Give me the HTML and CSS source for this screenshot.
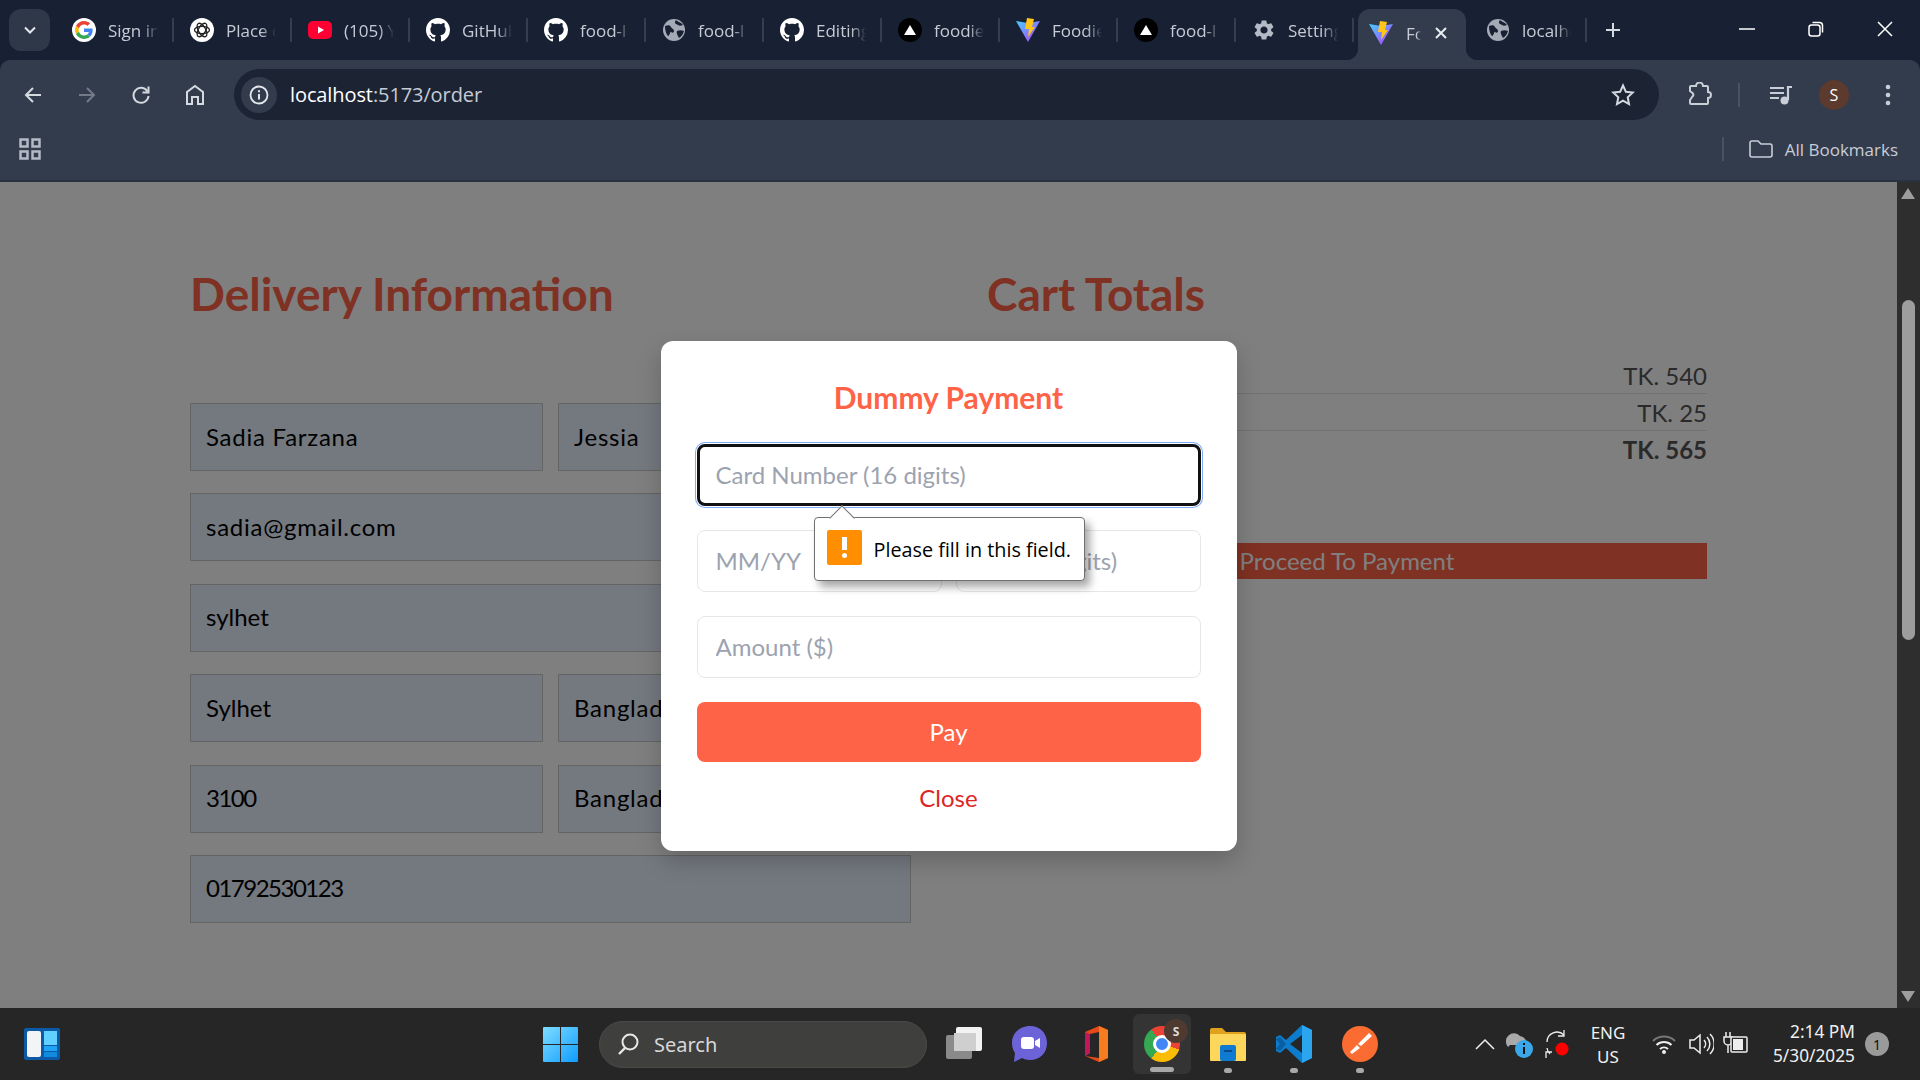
FILE: index.html
```html
<!DOCTYPE html>
<html lang="en">
<head>
    <meta charset="UTF-8">
    <meta name="viewport" content="width=device-width, initial-scale=1.0">
    <title>localhost:5173/order</title>
    <link rel="stylesheet" href="styles.css">
</head>
<body>

    <!-- shared icons -->
    <svg class="defs" aria-hidden="true">
        <symbol id="github" viewBox="0 0 16 16"><path fill="#fff" d="M8 0C3.58 0 0 3.58 0 8c0 3.54 2.29 6.53 5.47 7.59.4.07.55-.17.55-.38 0-.19-.01-.82-.01-1.49-2.01.37-2.53-.49-2.69-.94-.09-.23-.48-.94-.82-1.13-.28-.15-.68-.52-.01-.53.63-.01 1.08.58 1.23.82.72 1.21 1.87.87 2.33.66.07-.52.28-.87.51-1.07-1.78-.2-3.64-.89-3.64-3.95 0-.87.31-1.59.82-2.15-.08-.2-.36-1.02.08-2.12 0 0 .67-.21 2.2.82.64-.18 1.32-.27 2-.27.68 0 1.36.09 2 .27 1.53-1.04 2.2-.82 2.2-.82.44 1.1.16 1.92.08 2.12.51.56.82 1.27.82 2.15 0 3.07-1.87 3.75-3.65 3.95.29.25.54.73.54 1.48 0 1.07-.01 1.93-.01 2.2 0 .21.15.46.55.38A8.013 8.013 0 0016 8c0-4.42-3.58-8-8-8z"/></symbol>
        <symbol id="globe" viewBox="0 0 24 24"><circle cx="12" cy="12" r="11" fill="#a5abb6"/><path fill="#182133" d="M3 8c3-1 5-1 6 1s3 2 3 4-2 2-3 1-1 4-3 4c-2-2-3-6-3-10zM14 2c2 2 5 2 7 5-2 1-4 1-5 0s-3-1-3-2 0-2 1-3zM15 13c2-1 5-1 7 0-1 3-2 5-5 7-1-2-3-5-2-7z"/></symbol>
        <symbol id="next" viewBox="0 0 24 24"><circle cx="12" cy="12" r="12" fill="#000"/><path fill="#fff" d="M12 7l6 10H6z"/></symbol>
        <symbol id="vite" viewBox="0 0 24 24">
            <defs>
                <linearGradient id="viteV" x1="0" y1="0" x2="1" y2="1"><stop offset="0" stop-color="#41d1ff"/><stop offset="1" stop-color="#bd34fe"/></linearGradient>
            </defs>
            <path fill="url(#viteV)" d="M0 3l12 2 12-2-12 21z"/>
            <path fill="#ffc517" d="M11 0l7 1-2 8h3l-7 10 1-8H9z"/>
        </symbol>
    </svg>

    <div class="tabstrip">
        <button class="tab-search"><svg width="14" height="14" viewBox="0 0 14 14"><path d="M2 4.500l5 5 5-5" fill="none" stroke="#e4e7ec" stroke-width="2"/></svg></button>

        <div class="tab">
            <svg class="fav" viewBox="-8 -8 64 64"><circle cx="24" cy="24" r="32" fill="#fff"/><path fill="#EA4335" d="M24 9.5c3.54 0 6.71 1.22 9.21 3.6l6.85-6.85C35.9 2.38 30.47 0 24 0 14.62 0 6.51 5.38 2.56 13.22l7.98 6.19C12.43 13.72 17.74 9.5 24 9.5z"/><path fill="#4285F4" d="M46.98 24.55c0-1.57-.15-3.09-.38-4.55H24v9.02h12.94c-.58 2.96-2.26 5.48-4.78 7.18l7.73 6c4.51-4.18 7.09-10.36 7.09-17.65z"/><path fill="#FBBC05" d="M10.53 28.59c-.48-1.45-.76-2.99-.76-4.59s.27-3.14.76-4.59l-7.98-6.19C.92 16.46 0 20.12 0 24c0 3.88.92 7.54 2.56 10.78l7.97-6.19z"/><path fill="#34A853" d="M24 48c6.48 0 11.93-2.13 15.89-5.81l-7.73-6c-2.15 1.45-4.92 2.3-8.16 2.3-6.26 0-11.57-4.22-13.47-9.91l-7.98 6.19C6.51 42.62 14.62 48 24 48z"/></svg>
            <span class="tab-title">Sign in</span>
        </div>
        <div class="tab">
            <svg class="fav" viewBox="0 0 24 24"><circle cx="12" cy="12" r="12" fill="#fff"/><g fill="none" stroke="#222" stroke-width="1.3"><ellipse cx="12" cy="12" rx="7.5" ry="3.6"/><ellipse cx="12" cy="12" rx="7.5" ry="3.6" transform="rotate(60 12 12)"/><ellipse cx="12" cy="12" rx="7.5" ry="3.6" transform="rotate(120 12 12)"/></g></svg>
            <span class="tab-title">Place o</span>
        </div>
        <div class="tab">
            <svg class="fav" viewBox="0 0 24 24"><rect y="3" width="24" height="18" rx="5" fill="#ff0033"/><path fill="#fff" d="M10 8.500l6 3.500-6 3.500z"/></svg>
            <span class="tab-title">(105) Y</span>
        </div>
        <div class="tab"><svg class="fav"><use href="#github"/></svg><span class="tab-title">GitHub</span></div>
        <div class="tab"><svg class="fav"><use href="#github"/></svg><span class="tab-title">food-l</span></div>
        <div class="tab"><svg class="fav"><use href="#globe"/></svg><span class="tab-title">food-l</span></div>
        <div class="tab"><svg class="fav"><use href="#github"/></svg><span class="tab-title">Editing</span></div>
        <div class="tab"><svg class="fav"><use href="#next"/></svg><span class="tab-title">foodie</span></div>
        <div class="tab"><svg class="fav"><use href="#vite"/></svg><span class="tab-title">Foodie</span></div>
        <div class="tab"><svg class="fav"><use href="#next"/></svg><span class="tab-title">food-l</span></div>
        <div class="tab">
            <svg class="fav" viewBox="0 0 24 24"><path fill="#b4bac6" d="M19.14 12.94c.04-.3.06-.61.06-.94 0-.32-.02-.64-.07-.94l2.03-1.58c.18-.14.23-.41.12-.61l-1.92-3.32c-.12-.22-.37-.29-.59-.22l-2.39.96c-.5-.38-1.03-.7-1.62-.94l-.36-2.54c-.04-.24-.24-.41-.48-.41h-3.84c-.24 0-.43.17-.47.41l-.36 2.54c-.59.24-1.13.57-1.62.94l-2.39-.96c-.22-.08-.47 0-.59.22L2.74 8.87c-.12.21-.08.47.12.61l2.03 1.58c-.05.3-.09.63-.09.94s.02.64.07.94l-2.03 1.58c-.18.14-.23.41-.12.61l1.92 3.32c.12.22.37.29.59.22l2.39-.96c.5.38 1.03.7 1.62.94l.36 2.54c.05.24.24.41.48.41h3.84c.24 0 .44-.17.47-.41l.36-2.54c.59-.24 1.13-.56 1.62-.94l2.39.96c.22.08.47 0 .59-.22l1.92-3.32c.12-.22.07-.47-.12-.61l-2.01-1.58zM12 15.6c-1.98 0-3.6-1.62-3.6-3.6s1.62-3.6 3.6-3.6 3.6 1.62 3.6 3.6-1.62 3.6-3.6 3.6z"/></svg>
            <span class="tab-title">Settings</span>
        </div>
        <div class="tab-active">
            <svg class="fav"><use href="#vite"/></svg>
            <span class="tab-title">Foodie</span>
            <svg class="tab-close" width="14" height="14" viewBox="0 0 14 14"><path d="M2 2l10 10M12 2L2 12" stroke="#e8ebf0" stroke-width="2"/></svg>
        </div>
        <div class="tab tab-last"><svg class="fav"><use href="#globe"/></svg><span class="tab-title">localhost</span></div>
        <svg class="new-tab" width="18" height="18" viewBox="0 0 18 18"><path d="M9 2v14M2 9h14" stroke="#d5d9e0" stroke-width="2"/></svg>

        <div class="win-btns">
            <svg width="16" height="16" viewBox="0 0 16 16"><path d="M0 8h16" stroke="#fff" stroke-width="1.500"/></svg>
            <svg width="16" height="16" viewBox="0 0 16 16"><rect x="1" y="4" width="11" height="11" rx="2.500" fill="none" stroke="#fff" stroke-width="1.500"/><path d="M4.500 1.500h7a3 3 0 013 3v7" fill="none" stroke="#fff" stroke-width="1.500"/></svg>
            <svg width="16" height="16" viewBox="0 0 16 16"><path d="M1 1l14 14M15 1L1 15" stroke="#fff" stroke-width="1.500"/></svg>
        </div>
    </div>

    <div class="toolbar">
        <div class="nav-btns">
            <svg width="20" height="20" viewBox="0 0 20 20"><path d="M18 10H3M10 3l-7 7 7 7" fill="none" stroke="#d5d9e0" stroke-width="2"/></svg>
            <svg width="20" height="20" viewBox="0 0 20 20"><path d="M2 10h15M10 3l7 7-7 7" fill="none" stroke="#737a88" stroke-width="2"/></svg>
            <svg width="20" height="20" viewBox="0 0 20 20"><path d="M16.500 6.500A7.500 7.500 0 1017.500 11" fill="none" stroke="#d5d9e0" stroke-width="2"/><path d="M17.500 1.500v6h-6" fill="none" stroke="#d5d9e0" stroke-width="2"/></svg>
            <svg width="20" height="22" viewBox="0 0 20 22"><path d="M2 20V8l8-6 8 6v12h-5v-7H7v7z" fill="none" stroke="#d5d9e0" stroke-width="2"/></svg>
        </div>
        <div class="omnibox">
            <span class="site-info"><svg width="20" height="20" viewBox="0 0 20 20"><circle cx="10" cy="10" r="8.500" fill="none" stroke="#e4e7ec" stroke-width="1.800"/><path d="M10 9v5.500M10 5.300v2" stroke="#e4e7ec" stroke-width="2"/></svg></span>
            <span class="url"><b>localhost</b>:5173/order</span>
            <svg class="star" width="24" height="24" viewBox="0 0 24 24"><path d="M12 2.500l2.900 6.300 6.800.8-5 4.700 1.300 6.800-6-3.400-6 3.400 1.300-6.800-5-4.700 6.800-.8z" fill="none" stroke="#d5d9e0" stroke-width="2"/></svg>
        </div>
        <svg class="ext" width="26" height="26" viewBox="0 0 26 26"><path d="M3 5a1 1 0 011-1h5a3.500 3.500 0 017 0h4a1 1 0 011 1v5a3 3 0 010 6v5a1 1 0 01-1 1H4a1 1 0 01-1-1v-3l2.500-3.500a2.500 2.500 0 000-3.500L3 9z" fill="none" stroke="#c8cdd6" stroke-width="2"/></svg>
        <span class="tool-sep"></span>
        <svg class="media" width="24" height="22" viewBox="0 0 24 22"><path d="M1 4h14M1 9h14M1 14h9" stroke="#c8cdd6" stroke-width="2"/><path d="M19 16V3h4" fill="none" stroke="#c8cdd6" stroke-width="2.200"/><circle cx="15.500" cy="16.500" r="4" fill="#c8cdd6"/></svg>
        <span class="avatar">S</span>
        <svg class="kebab" width="6" height="22" viewBox="0 0 6 22"><circle cx="3" cy="3" r="2.300" fill="#c8cdd6"/><circle cx="3" cy="11" r="2.300" fill="#c8cdd6"/><circle cx="3" cy="19" r="2.300" fill="#c8cdd6"/></svg>
    </div>

    <div class="bookmarks">
        <svg width="22" height="22" viewBox="0 0 22 22"><g fill="none" stroke="#b4bac6" stroke-width="2.500"><rect x="1.500" y="1.500" width="7" height="7"/><rect x="13.500" y="1.500" width="7" height="7"/><rect x="1.500" y="13.500" width="7" height="7"/><rect x="13.500" y="13.500" width="7" height="7"/></g></svg>
        <span class="tool-sep bm-sep"></span>
        <svg width="24" height="18" viewBox="0 0 24 18"><path d="M1 3a2 2 0 012-2h6l3 3h9a2 2 0 012 2v9a2 2 0 01-2 2H3a2 2 0 01-2-2z" fill="none" stroke="#c8cdd6" stroke-width="1.600"/></svg>
        <span class="bm-label">All Bookmarks</span>
    </div>

    <div class="viewport">
        <main class="page">
            <section class="delivery">
                <h2>Delivery Information</h2>
                <form class="form-grid">
                    <div class="multi">
                        <input class="field field-wide" value="Sadia Farzana">
                        <input class="field field-wide" value="Jessia">
                    </div>
                    <input class="field field-wide" value="sadia@gmail.com">
                    <input class="field" value="sylhet">
                    <div class="multi">
                        <input class="field" value="Sylhet">
                        <input class="field field-wide" value="Bangladesh">
                    </div>
                    <div class="multi">
                        <input class="field field-num" value="3100">
                        <input class="field field-wide" value="Bangladesh">
                    </div>
                    <input class="field field-num" value="01792530123">
                </form>
            </section>

            <section class="cart">
                <h2>Cart Totals</h2>
                <div class="totals">
                    <div class="total-row"><span>Subtotal</span><span>TK. 540</span></div>
                    <div class="total-row"><span>Delivery Fee</span><span>TK. 25</span></div>
                    <div class="total-row total-sum"><span>Total</span><span>TK. 565</span></div>
                </div>
                <button class="proceed">Proceed To Payment</button>
            </section>
        </main>

        <div class="overlay">
            <div class="modal">
                <h3>Dummy Payment</h3>
                <input class="pay-input pay-focus" placeholder="Card Number (16 digits)">
                <div class="pay-row">
                    <input class="pay-input" placeholder="MM/YY">
                    <input class="pay-input" placeholder="CVV (3 digits)">
                </div>
                <input class="pay-input" placeholder="Amount ($)">
                <button class="pay-btn">Pay</button>
                <button class="close-btn">Close</button>

                <div class="bubble">
                    <span class="bubble-icon"></span>
                    <span class="bubble-text">Please fill in this field.</span>
                </div>
            </div>
        </div>

        <div class="scrollbar">
            <span class="arrow-up"></span>
            <span class="thumb"></span>
            <span class="arrow-down"></span>
        </div>
    </div>

    <footer class="taskbar">
        <svg class="widgets" width="36" height="32" viewBox="0 0 36 32"><rect width="36" height="32" rx="2" fill="#0c5aa6"/><rect x="3" y="3" width="14" height="26" rx="2" fill="#f2f4f6"/><rect x="20" y="3" width="13" height="14" fill="#5fd0ff"/><rect x="20" y="18" width="13" height="5" fill="#1ea4f4"/><rect x="20" y="24" width="13" height="5" fill="#0f8be0"/></svg>

        <div class="task-center">
            <svg class="start" width="35" height="35" viewBox="0 0 35 35"><defs><linearGradient id="win" x1="0" y1="0" x2="1" y2="1"><stop offset="0" stop-color="#7fdcff"/><stop offset="1" stop-color="#0f9cff"/></linearGradient></defs><path fill="url(#win)" d="M1 0h16v17H0V1a1 1 0 011-1zM18 0h16a1 1 0 011 1v16H18zM0 18h17v17H1a1 1 0 01-1-1zM18 18h17v16a1 1 0 01-1 1H18z"/></svg>
            <div class="search-pill">
                <svg width="24" height="24" viewBox="0 0 24 24"><circle cx="14" cy="10" r="7.500" fill="none" stroke="#e8e8e8" stroke-width="2"/><path d="M9 16l-6 6" stroke="#e8e8e8" stroke-width="2.400"/></svg>
                <span>Search</span>
            </div>
            <div class="app">
                <svg width="36" height="34" viewBox="0 0 36 34"><rect x="10" y="0" width="26" height="24" rx="2" fill="#f2f2f2"/><rect x="0" y="8" width="26" height="24" rx="2" fill="#8a8a8a"/><rect x="8" y="6" width="22" height="18" fill="#cfcfcf"/></svg>
            </div>
            <div class="app">
                <svg width="36" height="38" viewBox="0 0 36 38"><path d="M18 1c10 0 17 7 17 17s-7 17-17 17c-3 0-6-.7-8-2l-8 4 1-9c-2-3-3-6-3-10C0 8 8 1 18 1z" fill="#6d63d8"/><rect x="9" y="12" width="13" height="12" rx="3" fill="#fff"/><path d="M23 16l5-3v10l-5-3z" fill="#fff"/></svg>
            </div>
            <div class="app">
                <svg width="26" height="38" viewBox="0 0 26 38"><path d="M2 7L16 1l9 4v28l-9 4L2 31l14 2V7L7 9v19l-5 3z" fill="#e64a19"/><path d="M16 1l9 4v28l-9 4V33V7z" fill="#f57c1f"/><path d="M2 7l5 2v19l-5 3z" fill="#c2185b"/></svg>
            </div>
            <div class="app app-on">
                <span class="chrome"><span class="chrome-eye"></span></span>
                <span class="chrome-badge">S</span>
                <span class="app-pill"></span>
            </div>
            <div class="app">
                <svg width="36" height="34" viewBox="0 0 36 34"><path d="M0 3a2 2 0 012-2h10l4 4h18a2 2 0 012 2v4H0z" fill="#e0a21c"/><rect y="7" width="36" height="27" rx="1" fill="#fdd75b"/><rect x="10" y="18" width="16" height="16" rx="2" fill="#0f7ad1"/><rect x="14" y="23" width="8" height="2" fill="#0b4a86"/></svg>
                <span class="app-dot"></span>
            </div>
            <div class="app">
                <svg width="36" height="38" viewBox="0 0 36 38"><path d="M26 0l10 5v28l-10 5-16-15-6 5-4-2V12l4-2 6 5z" fill="#0e7ccc"/><path d="M26 0l10 5v28l-10 5z" fill="#2aa5ee"/><path d="M26 10L14 19l12 9z" fill="#252625"/><path d="M0 14l4-2 6 7-6 7-4-2 4-5z" fill="#0a5ea3"/></svg>
                <span class="app-dot"></span>
            </div>
            <div class="app">
                <svg width="36" height="36" viewBox="0 0 36 36"><circle cx="18" cy="18" r="18" fill="#fb6c33"/><path d="M27 7l3 3-11 10-3-2zM15 19l3 3-8 6-2-2z" fill="#fff"/></svg>
                <span class="app-dot"></span>
            </div>
        </div>

        <div class="tray">
            <svg width="20" height="12" viewBox="0 0 20 12"><path d="M1 11l9-9 9 9" fill="none" stroke="#eee" stroke-width="1.500"/></svg>
            <svg class="tray-cloud" width="28" height="30" viewBox="0 0 28 30"><path d="M2 18a8 8 0 0112-11 7 7 0 016 9H4z" fill="#a9a9a9"/><circle cx="18" cy="20" r="9" fill="#3aa7e8"/><path d="M18 18v7M18 14v2" stroke="#111" stroke-width="2"/></svg>
            <svg class="tray-sync" width="26" height="30" viewBox="0 0 26 30"><path d="M3 13A10 10 0 0120 6M20 1v6h-6M3 19a10 10 0 003 6M2 29v-6h6" fill="none" stroke="#eee" stroke-width="1.300"/><circle cx="18" cy="20" r="6.500" fill="#f00"/></svg>
            <div class="lang"><span>ENG</span><span>US</span></div>
            <svg class="tray-wifi" width="24" height="22" viewBox="0 0 24 22"><path d="M1 8a16 16 0 0122 0" fill="none" stroke="#777" stroke-width="2"/><path d="M4.500 12a11 11 0 0115 0M8 16a6 6 0 018 0" fill="none" stroke="#eee" stroke-width="2"/><circle cx="12" cy="19" r="2" fill="#eee"/></svg>
            <svg class="tray-sound" width="26" height="24" viewBox="0 0 26 24"><path d="M2 8h4l6-5v18l-6-5H2z" fill="none" stroke="#eee" stroke-width="1.500"/><path d="M16 8a6 6 0 010 8M19 5a10 10 0 010 14M22 2a14 14 0 010 20" fill="none" stroke="#eee" stroke-width="1.500"/></svg>
            <svg class="tray-power" width="26" height="26" viewBox="0 0 26 26"><path d="M3 1v5M7 1v5M1 6h8v4a4 4 0 01-8 0zM5 14v8" stroke="#eee" stroke-width="1.500" fill="none"/><rect x="8" y="6" width="16" height="15" rx="1" fill="#252625" stroke="#eee" stroke-width="1.500"/><rect x="10" y="8" width="10" height="11" fill="#eee"/></svg>
            <div class="clock"><span>2:14 PM</span><span>5/30/2025</span></div>
            <span class="notif">1</span>
        </div>
    </footer>

</body>
</html>
```

FILE: styles.css
```css
* {
    box-sizing: border-box;
}
body {
    margin: 0;
    width: 1920px;
    height: 1080px;
    overflow: hidden;
    display: flex;
    flex-direction: column;
    font-family: "Open Sans", "Noto Sans", sans-serif;
    background-color: #182133;
}
.defs {
    position: absolute;
    width: 0;
    height: 0;
}
button {
    border: none;
    font-family: inherit;
}

/* tab strip */
.tabstrip {
    height: 60px;
    flex: none;
    display: flex;
    padding-left: 9px;
    background-color: #182133;
}
.tab-search {
    width: 41px;
    height: 42px;
    margin: 9px 6px 0 0;
    padding: 0;
    border-radius: 12px;
    background-color: #2f3849;
    display: flex;
    align-items: center;
    justify-content: center;
}
.tab {
    width: 118px;
    height: 24px;
    margin-top: 18px;
    padding: 0 14px 0 16px;
    display: flex;
    align-items: center;
    gap: 12px;
    border-right: 2px solid #353e4f;
}
.tab-last {
    width: 121px;
    padding-left: 20px;
}
.fav {
    width: 24px;
    height: 24px;
    flex: none;
}
.tab-title {
    flex: 1;
    min-width: 0;
    overflow: hidden;
    white-space: nowrap;
    font-size: 17px;
    color: #c6cbd5;
    -webkit-mask-image: linear-gradient(to right, #000 70%, transparent);
    mask-image: linear-gradient(to right, #000 70%, transparent);
}
.tab-active {
    position: relative;
    width: 108px;
    height: 51px;
    margin-top: 9px;
    margin-left: 4px;
    padding: 0 18px 3px 11px;
    display: flex;
    align-items: center;
    gap: 13px;
    border-radius: 12px 12px 0 0;
    background-color: #333c4d;
}
.tab-active::before,
.tab-active::after {
    content: "";
    position: absolute;
    bottom: 0;
    width: 12px;
    height: 12px;
}
.tab-active::before {
    left: -12px;
    background: radial-gradient(circle at 0 0, transparent 12px, #333c4d 12.5px);
}
.tab-active::after {
    right: -12px;
    background: radial-gradient(circle at 100% 0, transparent 12px, #333c4d 12.5px);
}
.tab-close {
    flex: none;
}
.new-tab {
    margin: 21px 0 0 17px;
}
.win-btns {
    margin: 21px 0 0 auto;
    padding-right: 27px;
    display: flex;
    gap: 53px;
    align-items: flex-start;
}

/* toolbar */
.toolbar {
    height: 60px;
    flex: none;
    display: flex;
    align-items: center;
    padding-top: 9px;
    border-radius: 10px 10px 0 0;
    background-color: #333c4d;
}
.nav-btns {
    width: 234px;
    padding: 0 29px 0 23px;
    display: flex;
    justify-content: space-between;
    align-items: center;
}
.omnibox {
    width: 1425px;
    height: 51px;
    padding: 0 24px 0 7px;
    display: flex;
    align-items: center;
    border-radius: 26px;
    background-color: #1c2434;
}
.site-info {
    width: 36px;
    height: 36px;
    border-radius: 50%;
    background-color: #333c4d;
    display: flex;
    align-items: center;
    justify-content: center;
}
.url {
    margin-left: 13px;
    font-size: 20px;
    letter-spacing: -0.1px;
    color: #c6cbd5;
}
.url b {
    font-weight: 400;
    color: #fff;
}
.star {
    margin-left: auto;
}
.ext {
    margin-left: 28px;
}
.tool-sep {
    width: 2px;
    height: 24px;
    margin-left: 25px;
    background-color: #4a5262;
}
.media {
    margin-left: 29px;
}
.avatar {
    width: 30px;
    height: 30px;
    margin-left: 26px;
    border-radius: 50%;
    background-color: #5c3a2e;
    color: #fff;
    font-size: 16px;
    display: flex;
    align-items: center;
    justify-content: center;
}
.kebab {
    margin-left: 36px;
}

/* bookmarks */
.bookmarks {
    height: 62px;
    flex: none;
    display: flex;
    align-items: center;
    padding: 0 22px 2px 19px;
    background-color: #333c4d;
    border-bottom: 2px solid #2a3140;
}
.bm-sep {
    margin-left: auto;
    margin-right: 25px;
}
.bm-label {
    margin-left: 12px;
    font-size: 17px;
    color: #c8cdd6;
}

/* page under the dialog */
.viewport {
    position: relative;
    height: 826px;
    flex: none;
    display: flex;
}
.page {
    flex: 1;
    padding: 82px 0 0 190px;
    display: flex;
    background-color: #fff;
    font-family: "Lato", sans-serif;
    overflow: hidden;
}
.delivery {
    width: 721px;
}
.cart {
    width: 720px;
    margin-left: 76px;
}
h2 {
    margin: 0;
    height: 60px;
    line-height: 60px;
    font-size: 46px;
    font-weight: 700;
    color: #ff6347;
}
.form-grid {
    margin-top: 79px;
    display: flex;
    flex-direction: column;
    gap: 22.4px;
}
.multi {
    display: flex;
    gap: 15px;
}
.field {
    width: 100%;
    height: 68px;
    min-width: 0;
    padding: 0 15px 2px;
    border: 1px solid #c9c9c9;
    background-color: #e8f0fe;
    font-family: inherit;
    font-size: 24px;
    color: #000;
}
.field-wide {
    letter-spacing: 0.75px;
}
.field-num {
    letter-spacing: -1.5px;
}
.totals {
    margin-top: 33px;
    font-size: 24px;
    color: #555;
}
.total-row {
    height: 37px;
    display: flex;
    justify-content: space-between;
    align-items: center;
    border-bottom: 1px solid #e2e2e2;
}
.total-sum {
    border-bottom: none;
    font-weight: 700;
}
.proceed {
    display: block;
    width: 100%;
    height: 36px;
    margin-top: 75px;
    padding: 0 0 2px;
    background-color: #ff6347;
    color: #fff;
    font-family: "Lato", sans-serif;
    font-size: 24px;
}

/* payment dialog */
.overlay {
    position: absolute;
    left: 0;
    top: 0;
    right: 23px;
    bottom: 0;
    padding-top: 2px;
    display: flex;
    align-items: center;
    justify-content: center;
    background-color: rgba(0, 0, 0, 0.5);
}
.modal {
    position: relative;
    width: 576px;
    height: 510px;
    padding: 36px;
    display: flex;
    flex-direction: column;
    gap: 24px;
    border-radius: 12px;
    background-color: #fff;
    box-shadow: 0 10px 25px rgba(0, 0, 0, 0.2);
    font-family: "Lato", sans-serif;
}
h3 {
    margin: 0 0 -2px;
    height: 46px;
    line-height: 40px;
    text-align: center;
    font-size: 30px;
    font-weight: 700;
    color: #ff6347;
}
.pay-input {
    width: 100%;
    height: 62px;
    min-width: 0;
    padding: 0 18px;
    flex: none;
    border: 1px solid #e5e7eb;
    border-radius: 8px;
    background-color: #fff;
    font-family: inherit;
    font-size: 24px;
}
.pay-input::placeholder {
    color: #9ca3af;
    opacity: 1;
}
.pay-focus {
    border: 3px solid #111;
    padding: 0 16px;
    box-shadow: 0 0 0 1px #fff, 0 0 0 2px #7baaf7;
}
.pay-row {
    display: flex;
    gap: 14px;
}
.pay-row .pay-input {
    width: 245px;
}
.pay-btn {
    height: 60px;
    flex: none;
    padding: 0;
    border-radius: 8px;
    background-color: #ff6347;
    color: #fff;
    font-family: inherit;
    font-size: 24px;
}
.close-btn {
    height: 36px;
    margin-top: -6px;
    padding: 0;
    background: none;
    color: #dc2626;
    font-family: inherit;
    font-size: 24px;
}
.bubble {
    position: absolute;
    left: 153px;
    top: 176px;
    width: 271px;
    height: 64px;
    padding-left: 12px;
    display: flex;
    align-items: center;
    gap: 12px;
    border: 1px solid #707070;
    border-radius: 4px;
    background-color: #fff;
    box-shadow: 5px 6px 8px rgba(0, 0, 0, 0.35);
    font-family: "Open Sans", sans-serif;
}
.bubble::before {
    content: "";
    position: absolute;
    left: 18px;
    top: -9px;
    width: 17px;
    height: 17px;
    border-top: 1px solid #707070;
    border-left: 1px solid #707070;
    background-color: #fff;
    transform: rotate(45deg);
}
.bubble-icon {
    position: relative;
    width: 35px;
    height: 35px;
    margin-top: -4px;
    border-radius: 2px;
    background-color: #ff8f00;
}
.bubble-icon::before,
.bubble-icon::after {
    content: "";
    position: absolute;
    left: 15px;
    width: 5px;
    background-color: #fff;
}
.bubble-icon::before {
    top: 7px;
    height: 13px;
}
.bubble-icon::after {
    top: 23px;
    height: 5px;
    border-radius: 50%;
}
.bubble-text {
    font-size: 19.8px;
    color: #000;
    white-space: nowrap;
}

/* page scrollbar */
.scrollbar {
    position: relative;
    width: 23px;
    flex: none;
    background-color: #2e2e2e;
}
.arrow-up,
.arrow-down {
    position: absolute;
    left: 4px;
    width: 0;
    height: 0;
    border-left: 7px solid transparent;
    border-right: 7px solid transparent;
}
.arrow-up {
    top: 6px;
    border-bottom: 11px solid #9d9d9d;
}
.arrow-down {
    bottom: 6px;
    border-top: 11px solid #9d9d9d;
}
.thumb {
    position: absolute;
    left: 5px;
    top: 118px;
    width: 13px;
    height: 340px;
    border-radius: 7px;
    background-color: #9d9d9d;
}

/* windows taskbar */
.taskbar {
    height: 72px;
    flex: none;
    display: flex;
    align-items: center;
    padding: 0 31px 0 24px;
    background-color: #252625;
    font-family: "Noto Sans", sans-serif;
    color: #f0f0f0;
}
.taskbar svg {
    flex: none;
}
.task-center {
    margin-left: 483px;
    display: flex;
    align-items: center;
}
.start {
    margin-right: 21px;
}
.search-pill {
    width: 328px;
    height: 47px;
    margin-right: 4px;
    padding-left: 16px;
    display: flex;
    align-items: center;
    gap: 14px;
    border: 1px solid #4a4a49;
    border-radius: 24px;
    background-color: #3f3f3e;
    font-size: 20px;
    color: #d8d8d8;
}
.app {
    position: relative;
    width: 66px;
    height: 60px;
    display: flex;
    align-items: center;
    justify-content: center;
}
.app-on {
    width: 58px;
    margin: 0 4px;
    border-radius: 6px;
    background-color: #333433;
}
.chrome {
    width: 36px;
    height: 36px;
    border-radius: 50%;
    background: conic-gradient(#ea4335 0 30%, #fbbc05 30% 60%, #34a853 60% 90%, #ea4335 90%);
    display: flex;
    align-items: center;
    justify-content: center;
}
.chrome-eye {
    width: 18px;
    height: 18px;
    border: 3px solid #fff;
    border-radius: 50%;
    background-color: #4285f4;
}
.chrome-badge {
    position: absolute;
    right: 3px;
    top: 5px;
    width: 24px;
    height: 24px;
    border-radius: 50%;
    background-color: #4f3a31;
    color: #ddd;
    font-size: 12px;
    font-weight: 700;
    display: flex;
    align-items: center;
    justify-content: center;
}
.app-pill,
.app-dot {
    position: absolute;
    left: 50%;
    height: 5px;
    border-radius: 3px;
    background-color: #a8a8a8;
}
.app-pill {
    width: 24px;
    bottom: 2px;
    margin-left: -12px;
}
.app-dot {
    width: 8px;
    bottom: 1px;
    margin-left: -4px;
}
.tray {
    margin-left: auto;
    display: flex;
    align-items: center;
}
.tray-cloud {
    margin-left: 11px;
}
.tray-sync {
    margin-left: 10px;
}
.lang {
    width: 60px;
    margin-left: 8px;
    display: flex;
    flex-direction: column;
    align-items: center;
    gap: 1px;
    font-size: 17px;
    line-height: 23px;
}
.tray-wifi {
    margin-left: 14px;
}
.tray-sound {
    margin-left: 12px;
}
.tray-power {
    margin-left: 9px;
}
.clock {
    width: 100px;
    margin-left: 6px;
    display: flex;
    flex-direction: column;
    align-items: flex-end;
    font-size: 17.3px;
    line-height: 24px;
}
.notif {
    width: 24px;
    height: 24px;
    margin-left: 10px;
    border-radius: 50%;
    background-color: #9a9a9a;
    color: #111;
    font-size: 14px;
    display: flex;
    align-items: center;
    justify-content: center;
}
```
